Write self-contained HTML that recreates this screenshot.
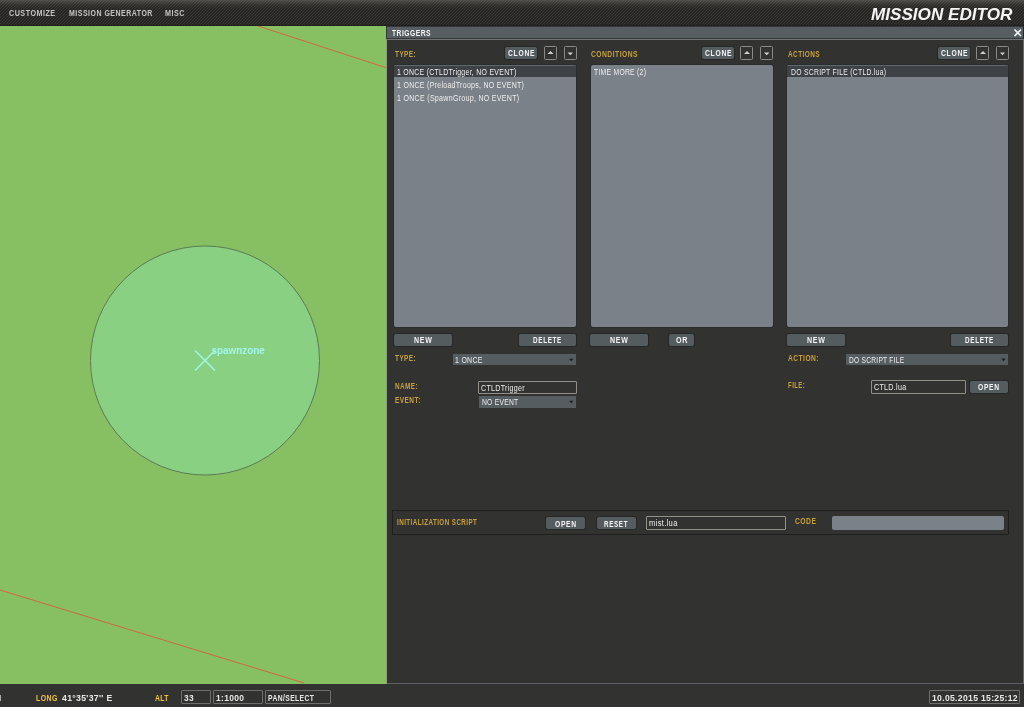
<!DOCTYPE html>
<html><head><meta charset="utf-8">
<style>
*{margin:0;padding:0;box-sizing:border-box}
body{will-change:transform}
html,body{width:1024px;height:707px;overflow:hidden;background:#323231;font-family:"Liberation Sans",sans-serif}
.a{position:absolute}
.t{position:absolute;line-height:1;white-space:nowrap;transform-origin:0 0;filter:blur(0.3px)}

#topgrad{left:0;top:0;width:1024px;height:26px;background:linear-gradient(rgba(110,110,105,0.55) 0,rgba(80,80,75,0.25) 5px,rgba(0,0,0,0) 9px,rgba(0,0,0,0) 24px,rgba(0,0,0,0.35) 26px)}
#map{left:0;top:26px;width:386px;height:658px;background:#86c062;overflow:hidden}
#panel{left:386px;top:26px;width:638px;height:658px;background:#323231}
.btn{background:#555c60;border-radius:2px;box-shadow:0 0 0 1px rgba(20,20,20,0.35)}
.arr{border:1px solid #8a8a86;border-radius:1.5px}
.list{background:#7b8188;border-radius:2px;overflow:hidden;box-shadow:0 0 0 1px #2a2d2f}
.sel{position:absolute;left:0;top:0;width:100%;height:12px;background:#3e4145;border-top:1px solid #62676c}
.dd{background:#565d61}
.inp{border:1px solid #928f88;border-radius:1px}
.sb{border:1px solid #6e6e6c;border-radius:1px}
.tri{width:0;height:0;border-left:2.5px solid transparent;border-right:2.5px solid transparent}
</style></head><body>
<svg id="top" class="a" width="1024" height="26" style="left:0;top:0"><defs><pattern id="cf" width="3" height="3" patternUnits="userSpaceOnUse"><rect width="3" height="3" fill="#262523"/><rect x="2" y="0" width="1" height="1" fill="#383734"/><rect x="1" y="1" width="1" height="1" fill="#383734"/><rect x="0" y="2" width="1" height="1" fill="#383734"/></pattern></defs><rect width="1024" height="26" fill="url(#cf)"/></svg>
<div id="topgrad" class="a"></div>

<div id="map" class="a">
<svg width="386" height="658" style="position:absolute;left:0;top:0">
<line x1="258" y1="0" x2="390" y2="43" stroke="#d0683c" stroke-width="1"/>
<line x1="0" y1="564" x2="304" y2="657" stroke="#d0683c" stroke-width="1"/>
<circle cx="205" cy="334.5" r="114.5" fill="#8ad083" stroke="#5a7c55" stroke-width="1"/>
<line x1="195" y1="324.5" x2="215" y2="344.5" stroke="#a2f6ec" stroke-width="1.4"/>
<line x1="215" y1="324.5" x2="195" y2="344.5" stroke="#a2f6ec" stroke-width="1.4"/>
<text x="211.5" y="328.5" font-family="Liberation Sans" font-size="11.5" font-weight="bold" fill="#a2f6ec" transform="translate(211.5 0) scale(0.86 1) translate(-211.5 0)">spawnzone</text>
</svg>
</div>

<div id="panel" class="a"></div>
<div class="a" style="left:386px;top:40px;width:1px;height:644px;background:#8e9c86"></div>
<div class="a" style="left:1023px;top:39px;width:1px;height:645px;background:#6a6a68"></div>
<div class="a" style="left:386px;top:26px;width:638px;height:13px;background:#565e61;border:1px solid #33383c;border-right:1px solid #2a2a2a"></div>
<div class="a" style="left:386px;top:39px;width:638px;height:1px;background:#727474"></div>
<svg class="a" style="left:1013px;top:28px" width="10" height="10"><path d="M1.5 1.5 L8 8 M8 1.5 L1.5 8" stroke="#f2f2f2" stroke-width="1.6"/></svg>

<!-- TYPE column -->
<div class="a btn" style="left:505px;top:47px;width:32px;height:12px"></div>
<div class="a arr" style="left:544px;top:46px;width:13px;height:14px"></div>
<div class="a arr" style="left:564px;top:46px;width:13px;height:14px"></div>
<div class="a list" style="left:394px;top:65px;width:182px;height:262px"><div class="sel"></div></div>
<div class="a btn" style="left:394px;top:334px;width:58px;height:12px"></div>
<div class="a btn" style="left:519px;top:334px;width:57px;height:12px"></div>
<div class="a dd" style="left:453px;top:354px;width:123px;height:11px"></div>
<div class="a inp" style="left:478px;top:381px;width:99px;height:13px"></div>
<div class="a dd" style="left:479px;top:396px;width:97px;height:12px"></div>

<!-- CONDITIONS -->
<div class="a btn" style="left:702px;top:47px;width:32px;height:12px"></div>
<div class="a arr" style="left:740px;top:46px;width:13px;height:14px"></div>
<div class="a arr" style="left:760px;top:46px;width:13px;height:14px"></div>
<div class="a list" style="left:591px;top:65px;width:182px;height:262px"></div>
<div class="a btn" style="left:590px;top:334px;width:58px;height:12px"></div>
<div class="a btn" style="left:669px;top:334px;width:25px;height:12px"></div>

<!-- ACTIONS -->
<div class="a btn" style="left:938px;top:47px;width:32px;height:12px"></div>
<div class="a arr" style="left:976px;top:46px;width:13px;height:14px"></div>
<div class="a arr" style="left:996px;top:46px;width:13px;height:14px"></div>
<div class="a list" style="left:787px;top:65px;width:221px;height:262px"><div class="sel"></div></div>
<div class="a btn" style="left:787px;top:334px;width:58px;height:12px"></div>
<div class="a btn" style="left:951px;top:334px;width:57px;height:12px"></div>
<div class="a dd" style="left:846px;top:354px;width:162px;height:11px"></div>
<div class="a inp" style="left:871px;top:380px;width:95px;height:14px"></div>
<div class="a btn" style="left:970px;top:381px;width:38px;height:12px"></div>

<!-- INIT SCRIPT -->
<div class="a" style="left:392px;top:510px;width:617px;height:25px;border:1px solid #1f1f1f"></div>
<div class="a btn" style="left:546px;top:517px;width:39px;height:12px"></div>
<div class="a btn" style="left:597px;top:517px;width:39px;height:12px"></div>
<div class="a inp" style="left:646px;top:516px;width:140px;height:14px"></div>
<div class="a" style="left:832px;top:516px;width:172px;height:14px;background:#7b8188;border-radius:2px"></div>

<div class="a" style="left:0;top:684px;width:1024px;height:23px;background:#323231"></div>
<div class="a" style="left:387px;top:683px;width:637px;height:1px;background:#5c6062"></div>
<div class="a" style="left:0;top:695px;width:1px;height:6px;background:#aaa"></div>
<div class="a sb" style="left:181px;top:690px;width:30px;height:14px"></div>
<div class="a sb" style="left:213px;top:690px;width:50px;height:14px"></div>
<div class="a sb" style="left:265px;top:690px;width:66px;height:14px"></div>
<div class="a sb" style="left:929px;top:690px;width:91px;height:14px"></div>

<svg class="a" style="left:0;top:0" width="1024" height="707">
<path d="M547.5 54 L550.5 51 L553.5 54 Z" fill="#d0d0d0"/>
<path d="M567.5 52.5 L573 52.5 L570.25 55.3 Z" fill="#d0d0d0"/>
<path d="M744 54 L747 51 L750 54 Z" fill="#d0d0d0"/>
<path d="M764 52.5 L769.5 52.5 L766.75 55.3 Z" fill="#d0d0d0"/>
<path d="M980 54 L983 51 L986 54 Z" fill="#d0d0d0"/>
<path d="M1000 52.5 L1005 52.5 L1002.5 55.3 Z" fill="#d0d0d0"/>
<path d="M569 358.7 L573.5 358.7 L571.25 361.3 Z" fill="#1e1e1e"/>
<path d="M569 400.7 L573.5 400.7 L571.25 403.3 Z" fill="#1e1e1e"/>
<path d="M1001.3 358.5 L1005.8 358.5 L1003.55 361.2 Z" fill="#1e1e1e"/>
</svg>
<div class="t" style="left:8.60px;top:8.60px;font-size:8.5px;font-weight:bold;font-style:normal;color:#c4c4c4;letter-spacing:0.6px;transform:scaleX(0.8436)">CUSTOMIZE</div>
<div class="t" style="left:68.60px;top:8.70px;font-size:8.5px;font-weight:bold;font-style:normal;color:#c4c4c4;letter-spacing:0.6px;transform:scaleX(0.8228)">MISSION GENERATOR</div>
<div class="t" style="left:165.40px;top:8.70px;font-size:8.5px;font-weight:bold;font-style:normal;color:#c4c4c4;letter-spacing:0.6px;transform:scaleX(0.8478)">MISC</div>
<div class="t" style="left:870.90px;top:6.50px;font-size:16px;font-weight:bold;font-style:italic;color:#f4f4f4;letter-spacing:0px;transform:scaleX(1.0697)">MISSION EDITOR</div>
<div class="t" style="left:392.00px;top:29.20px;font-size:8.5px;font-weight:bold;font-style:normal;color:#f4f4f4;letter-spacing:0.6px;transform:scaleX(0.7917)">TRIGGERS</div>
<div class="t" style="left:394.90px;top:49.90px;font-size:8.5px;font-weight:bold;font-style:normal;color:#c8a13a;letter-spacing:0.6px;transform:scaleX(0.7556)">TYPE:</div>
<div class="t" style="left:591.10px;top:49.90px;font-size:8.5px;font-weight:bold;font-style:normal;color:#c8a13a;letter-spacing:0.6px;transform:scaleX(0.7914)">CONDITIONS</div>
<div class="t" style="left:787.60px;top:50.00px;font-size:8.5px;font-weight:bold;font-style:normal;color:#c8a13a;letter-spacing:0.6px;transform:scaleX(0.7548)">ACTIONS</div>
<div class="t" style="left:508.20px;top:49.40px;font-size:8.5px;font-weight:bold;font-style:normal;color:#f4f4f4;letter-spacing:0.9px;transform:scaleX(0.7939)">CLONE</div>
<div class="t" style="left:705.20px;top:49.40px;font-size:8.5px;font-weight:bold;font-style:normal;color:#f4f4f4;letter-spacing:0.9px;transform:scaleX(0.7939)">CLONE</div>
<div class="t" style="left:940.90px;top:49.40px;font-size:8.5px;font-weight:bold;font-style:normal;color:#f4f4f4;letter-spacing:0.9px;transform:scaleX(0.7939)">CLONE</div>
<div class="t" style="left:396.88px;top:67.70px;font-size:8.5px;font-weight:normal;font-style:normal;color:#eeeeee;letter-spacing:0.35px;transform:scaleX(0.8152)">1 ONCE (CTLDTrigger, NO EVENT)</div>
<div class="t" style="left:396.88px;top:80.90px;font-size:8.5px;font-weight:normal;font-style:normal;color:#eeeeee;letter-spacing:0.35px;transform:scaleX(0.8235)">1 ONCE (PreloadTroops, NO EVENT)</div>
<div class="t" style="left:396.87px;top:93.80px;font-size:8.5px;font-weight:normal;font-style:normal;color:#eeeeee;letter-spacing:0.35px;transform:scaleX(0.8295)">1 ONCE (SpawnGroup, NO EVENT)</div>
<div class="t" style="left:594.20px;top:67.80px;font-size:8.5px;font-weight:normal;font-style:normal;color:#eeeeee;letter-spacing:0.35px;transform:scaleX(0.7969)">TIME MORE (2)</div>
<div class="t" style="left:790.50px;top:68.00px;font-size:8.5px;font-weight:normal;font-style:normal;color:#eeeeee;letter-spacing:0.35px;transform:scaleX(0.8000)">DO SCRIPT FILE (CTLD.lua)</div>
<div class="t" style="left:413.80px;top:336.00px;font-size:8.5px;font-weight:bold;font-style:normal;color:#f4f4f4;letter-spacing:0.9px;transform:scaleX(0.8273)">NEW</div>
<div class="t" style="left:533.40px;top:336.00px;font-size:8.5px;font-weight:bold;font-style:normal;color:#f4f4f4;letter-spacing:0.9px;transform:scaleX(0.7447)">DELETE</div>
<div class="t" style="left:610.00px;top:336.00px;font-size:8.5px;font-weight:bold;font-style:normal;color:#f4f4f4;letter-spacing:0.9px;transform:scaleX(0.8273)">NEW</div>
<div class="t" style="left:676.20px;top:336.00px;font-size:8.5px;font-weight:bold;font-style:normal;color:#f4f4f4;letter-spacing:0.9px;transform:scaleX(0.8462)">OR</div>
<div class="t" style="left:807.00px;top:336.00px;font-size:8.5px;font-weight:bold;font-style:normal;color:#f4f4f4;letter-spacing:0.9px;transform:scaleX(0.8273)">NEW</div>
<div class="t" style="left:965.40px;top:336.00px;font-size:8.5px;font-weight:bold;font-style:normal;color:#f4f4f4;letter-spacing:0.9px;transform:scaleX(0.7447)">DELETE</div>
<div class="t" style="left:394.80px;top:354.00px;font-size:8.5px;font-weight:bold;font-style:normal;color:#c8a13a;letter-spacing:0.6px;transform:scaleX(0.7556)">TYPE:</div>
<div class="t" style="left:455.38px;top:355.60px;font-size:8.5px;font-weight:normal;font-style:normal;color:#eeeeee;letter-spacing:0.35px;transform:scaleX(0.8219)">1 ONCE</div>
<div class="t" style="left:394.80px;top:381.70px;font-size:8.5px;font-weight:bold;font-style:normal;color:#c8a13a;letter-spacing:0.6px;transform:scaleX(0.7500)">NAME:</div>
<div class="t" style="left:394.80px;top:396.30px;font-size:8.5px;font-weight:bold;font-style:normal;color:#c8a13a;letter-spacing:0.6px;transform:scaleX(0.7636)">EVENT:</div>
<div class="t" style="left:481.10px;top:384.00px;font-size:8.5px;font-weight:normal;font-style:normal;color:#eeeeee;letter-spacing:0.35px;transform:scaleX(0.8346)">CTLDTrigger</div>
<div class="t" style="left:481.70px;top:398.00px;font-size:8.5px;font-weight:normal;font-style:normal;color:#eeeeee;letter-spacing:0.35px;transform:scaleX(0.7891)">NO EVENT</div>
<div class="t" style="left:787.60px;top:354.20px;font-size:8.5px;font-weight:bold;font-style:normal;color:#c8a13a;letter-spacing:0.6px;transform:scaleX(0.7816)">ACTION:</div>
<div class="t" style="left:848.90px;top:355.70px;font-size:8.5px;font-weight:normal;font-style:normal;color:#eeeeee;letter-spacing:0.35px;transform:scaleX(0.7761)">DO SCRIPT FILE</div>
<div class="t" style="left:787.60px;top:381.20px;font-size:8.5px;font-weight:bold;font-style:normal;color:#c8a13a;letter-spacing:0.6px;transform:scaleX(0.7130)">FILE:</div>
<div class="t" style="left:874.00px;top:383.10px;font-size:8.5px;font-weight:normal;font-style:normal;color:#eeeeee;letter-spacing:0.35px;transform:scaleX(0.8368)">CTLD.lua</div>
<div class="t" style="left:977.70px;top:383.10px;font-size:8.5px;font-weight:bold;font-style:normal;color:#f4f4f4;letter-spacing:0.9px;transform:scaleX(0.7889)">OPEN</div>
<div class="t" style="left:396.80px;top:517.50px;font-size:8.5px;font-weight:bold;font-style:normal;color:#c8a13a;letter-spacing:0.6px;transform:scaleX(0.7358)">INITIALIZATION SCRIPT</div>
<div class="t" style="left:554.80px;top:519.60px;font-size:8.5px;font-weight:bold;font-style:normal;color:#f4f4f4;letter-spacing:0.9px;transform:scaleX(0.7852)">OPEN</div>
<div class="t" style="left:604.00px;top:519.60px;font-size:8.5px;font-weight:bold;font-style:normal;color:#f4f4f4;letter-spacing:0.9px;transform:scaleX(0.7344)">RESET</div>
<div class="t" style="left:648.60px;top:519.30px;font-size:8.5px;font-weight:normal;font-style:normal;color:#eeeeee;letter-spacing:0.35px;transform:scaleX(0.8938)">mist.lua</div>
<div class="t" style="left:795.40px;top:517.10px;font-size:8.5px;font-weight:bold;font-style:normal;color:#c8a13a;letter-spacing:0.6px;transform:scaleX(0.7962)">CODE</div>
<div class="t" style="left:35.70px;top:694.00px;font-size:8.5px;font-weight:bold;font-style:normal;color:#f0c432;letter-spacing:0.5px;transform:scaleX(0.8192)">LONG</div>
<div class="t" style="left:61.90px;top:694.00px;font-size:8.5px;font-weight:bold;font-style:normal;color:#e8e8e8;letter-spacing:0.3px;transform:scaleX(1.0224)">41°35'37'' E</div>
<div class="t" style="left:154.80px;top:694.20px;font-size:8.5px;font-weight:bold;font-style:normal;color:#f0c432;letter-spacing:0.5px;transform:scaleX(0.8000)">ALT</div>
<div class="t" style="left:184.00px;top:693.60px;font-size:8.5px;font-weight:bold;font-style:normal;color:#e8e8e8;letter-spacing:0.3px;transform:scaleX(0.9800)">33</div>
<div class="t" style="left:216.30px;top:693.60px;font-size:8.5px;font-weight:bold;font-style:normal;color:#e8e8e8;letter-spacing:0.3px;transform:scaleX(0.9964)">1:1000</div>
<div class="t" style="left:268.40px;top:693.60px;font-size:8.5px;font-weight:bold;font-style:normal;color:#e8e8e8;letter-spacing:0.5px;transform:scaleX(0.7948)">PAN/SELECT</div>
<div class="t" style="left:932.00px;top:693.50px;font-size:8.5px;font-weight:bold;font-style:normal;color:#e8e8e8;letter-spacing:0.3px;transform:scaleX(1.0155)">10.05.2015 15:25:12</div>
</body></html>
